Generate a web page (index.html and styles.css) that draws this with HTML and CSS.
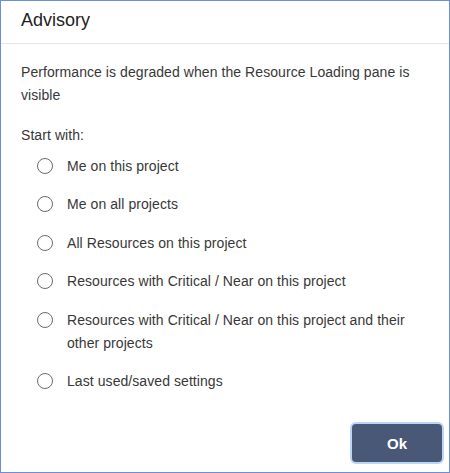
FILE: index.html
```html
<!DOCTYPE html>
<html lang="en">
<head>
    <meta charset="UTF-8">
    <title>Advisory</title>
    <link rel="stylesheet" href="styles.css">
</head>
<body>
    <div class="dialog">
        <div class="dialog-header">
            <h1>Advisory</h1>
        </div>

        <div class="dialog-body">
            <p class="message">Performance is degraded when the Resource Loading pane is visible</p>
            <p class="prompt">Start with:</p>
            <ul class="options">
                <li class="option"><span class="radio"></span><span class="label">Me on this project</span></li>
                <li class="option"><span class="radio"></span><span class="label">Me on all projects</span></li>
                <li class="option"><span class="radio"></span><span class="label">All Resources on this project</span></li>
                <li class="option"><span class="radio"></span><span class="label">Resources with Critical / Near on this project</span></li>
                <li class="option"><span class="radio"></span><span class="label">Resources with Critical / Near on this project and their other projects</span></li>
                <li class="option"><span class="radio"></span><span class="label">Last used/saved settings</span></li>
            </ul>
        </div>

        <div class="dialog-footer">
            <button class="btn-ok">Ok</button>
        </div>
    </div>
</body>
</html>
```

FILE: styles.css
```css
html, body {
    margin: 0;
    padding: 0;
}
body {
    font-family: "Liberation Sans", Arial, sans-serif;
    color: #383838;
    background-color: white;
}
.dialog {
    width: 450px;
    height: 473px;
    box-sizing: border-box;
    border: 1px solid #6b8fd6;
    display: flex;
    flex-direction: column;
}
.dialog-header {
    padding: 7px 20px 11px;
    border-bottom: 1px solid #e6e6e6;
}
.dialog-header h1 {
    margin: 0;
    font-size: 18px;
    font-weight: normal;
    line-height: 24px;
    color: #222;
}
.dialog-body {
    padding: 17px 19px 0 20px;
    font-size: 14px;
    line-height: 23px;
    letter-spacing: 0.07px;
}
.message {
    margin: 0 0 17px;
}
.prompt {
    margin: 0;
}
.options {
    list-style: none;
    margin: 0;
    padding: 0 0 0 16px;
}
.option {
    display: flex;
    align-items: flex-start;
    gap: 14px;
    padding: 7.75px 0;
}
.radio {
    flex: none;
    width: 16px;
    height: 16px;
    margin-top: 3px;
    box-sizing: border-box;
    border: 1.5px solid #6b6b6b;
    border-radius: 50%;
}
.dialog-footer {
    margin-top: auto;
    display: flex;
    justify-content: flex-end;
    padding: 0 7px 10px;
}
.btn-ok {
    width: 90px;
    height: 38px;
    border: none;
    border-radius: 4px;
    background-color: #4a5878;
    color: white;
    font-family: "Liberation Sans", Arial, sans-serif;
    font-size: 15px;
    font-weight: bold;
    box-shadow: 0 0 0 2px #b9d6f6;
    cursor: pointer;
}
```
